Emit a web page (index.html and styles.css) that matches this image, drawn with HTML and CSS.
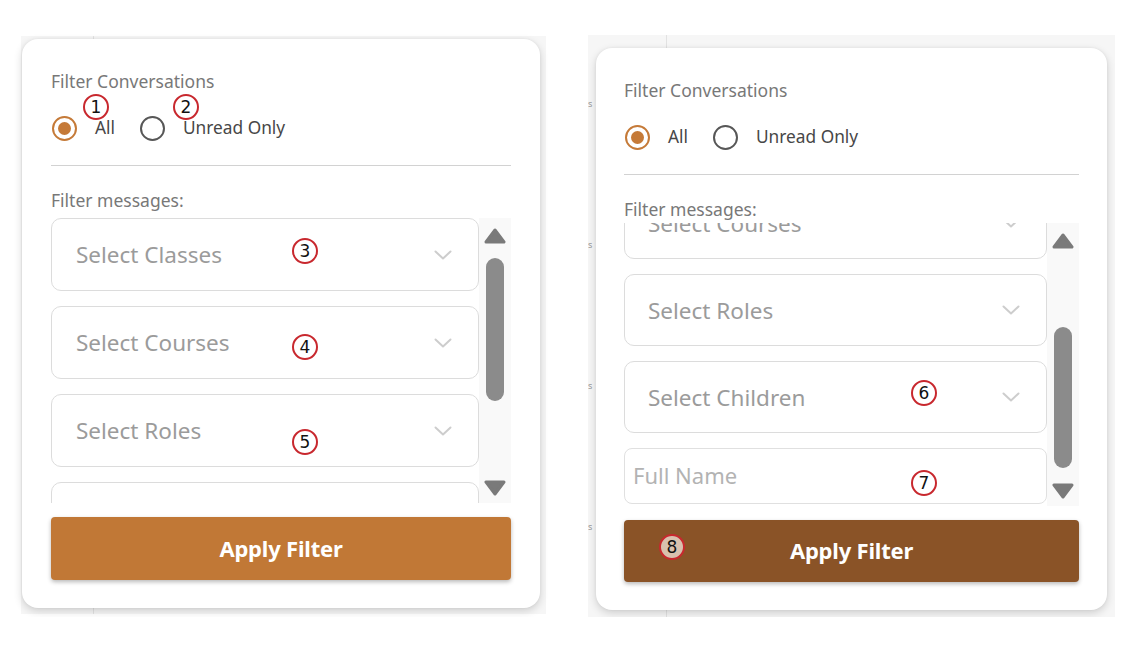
FILE: index.html
```html
<!DOCTYPE html>
<html lang="en">
<head>
<meta charset="utf-8">
<title>Filter Conversations</title>
<link rel="stylesheet" href="styles.css">
</head>
<body>
<div class="page">
  <section class="shot shot--left">
    <div class="card">
      <div class="label">Filter Conversations</div>
      <div class="radios">
        <div class="radio radio--on"><span class="ring"></span><span class="radio-text">All</span></div>
        <div class="radio"><span class="ring"></span><span class="radio-text">Unread Only</span></div>
      </div>
      <div class="divider"></div>
      <div class="label label--msg">Filter messages:</div>
      <div class="msg-area">
        <div class="msg-viewport">
          <div class="msg-list">
            <div class="select"><span>Select Classes</span><svg class="chev" viewBox="0 0 18 10" width="18" height="10"><path d="M1.5 1.5 L9 8.5 L16.5 1.5"/></svg></div>
            <div class="select"><span>Select Courses</span><svg class="chev" viewBox="0 0 18 10" width="18" height="10"><path d="M1.5 1.5 L9 8.5 L16.5 1.5"/></svg></div>
            <div class="select"><span>Select Roles</span><svg class="chev" viewBox="0 0 18 10" width="18" height="10"><path d="M1.5 1.5 L9 8.5 L16.5 1.5"/></svg></div>
            <div class="select"><span>Select Children</span><svg class="chev" viewBox="0 0 18 10" width="18" height="10"><path d="M1.5 1.5 L9 8.5 L16.5 1.5"/></svg></div>
            <div class="input">Full Name</div>
          </div>
        </div>
        <div class="scrollbar">
          <svg class="arrow" viewBox="0 0 22 16" width="22" height="16"><path d="M11 2 L20 14 L2 14 Z"/></svg>
          <div class="track"><div class="thumb" style="margin-top:14px;height:143px"></div></div>
          <svg class="arrow" viewBox="0 0 22 16" width="22" height="16"><path d="M2 2 L20 2 L11 14 Z"/></svg>
        </div>
      </div>
      <button class="apply">Apply Filter</button>
    </div>
    <span class="badge b1">1</span>
    <span class="badge b2">2</span>
    <span class="badge b3">3</span>
    <span class="badge b4">4</span>
    <span class="badge b5">5</span>
  </section>

  <section class="shot shot--right">
    <div class="strip"><span>s</span><span>s</span><span>s</span><span>s</span></div>
    <div class="card card--scrolled">
      <div class="label">Filter Conversations</div>
      <div class="radios">
        <div class="radio radio--on"><span class="ring"></span><span class="radio-text">All</span></div>
        <div class="radio"><span class="ring"></span><span class="radio-text">Unread Only</span></div>
      </div>
      <div class="divider"></div>
      <div class="label label--msg">Filter messages:</div>
      <div class="msg-area">
        <div class="msg-viewport">
          <div class="msg-list" style="margin-top:-123px">
            <div class="select"><span>Select Classes</span><svg class="chev" viewBox="0 0 18 10" width="18" height="10"><path d="M1.5 1.5 L9 8.5 L16.5 1.5"/></svg></div>
            <div class="select"><span>Select Courses</span><svg class="chev" viewBox="0 0 18 10" width="18" height="10"><path d="M1.5 1.5 L9 8.5 L16.5 1.5"/></svg></div>
            <div class="select"><span>Select Roles</span><svg class="chev" viewBox="0 0 18 10" width="18" height="10"><path d="M1.5 1.5 L9 8.5 L16.5 1.5"/></svg></div>
            <div class="select"><span>Select Children</span><svg class="chev" viewBox="0 0 18 10" width="18" height="10"><path d="M1.5 1.5 L9 8.5 L16.5 1.5"/></svg></div>
            <div class="input">Full Name</div>
          </div>
        </div>
        <div class="scrollbar">
          <svg class="arrow" viewBox="0 0 22 16" width="22" height="16"><path d="M11 2 L20 14 L2 14 Z"/></svg>
          <div class="track"><div class="thumb" style="margin-top:78px;height:141px"></div></div>
          <svg class="arrow" viewBox="0 0 22 16" width="22" height="16"><path d="M2 2 L20 2 L11 14 Z"/></svg>
        </div>
      </div>
      <button class="apply apply--pressed">Apply Filter</button>
    </div>
    <span class="badge b6">6</span>
    <span class="badge b7">7</span>
    <span class="badge b8 badge--filled">8</span>
  </section>
</div>
</body>
</html>
```

FILE: styles.css
```css
* { box-sizing: border-box; }

html, body {
  margin: 0;
  padding: 0;
  background: #ffffff;
}

body {
  font-family: "Noto Sans", "Open Sans", sans-serif;
}

.page {
  display: flex;
  align-items: flex-start;
  gap: 42px;
  padding: 35px 0 0 21px;
}

.shot {
  position: relative;
  background-color: #f6f6f6;
}

.shot--left {
  width: 525px;
  height: 578px;
  margin-top: 1px;
  padding: 3px 0 0 1px;
  background-image: linear-gradient(#e2e2e2, #e2e2e2);
  background-size: 1px 100%;
  background-position: 72px 0;
  background-repeat: no-repeat;
}

.shot--right {
  width: 527px;
  height: 582px;
  display: flex;
  align-items: flex-start;
  background-image: linear-gradient(#e2e2e2, #e2e2e2);
  background-size: 1px 100%;
  background-position: 78px 0;
  background-repeat: no-repeat;
}

.strip {
  width: 8px;
  flex: none;
  display: flex;
  flex-direction: column;
  padding-top: 62px;
  gap: 128px;
  font-size: 9px;
  line-height: 13px;
  color: #9a9a9a;
  overflow: hidden;
}

.card {
  width: 518px;
  background: #ffffff;
  border-radius: 16px;
  box-shadow: 0 3px 9px rgba(0, 0, 0, 0.16), 0 0 3px rgba(0, 0, 0, 0.06);
  padding: 32px 29px 28px 29px;
  display: flex;
  flex-direction: column;
}

.card--scrolled {
  width: 511px;
  margin-top: 13px;
  padding: 32px 28px 28px 28px;
}

.label {
  font-size: 17.5px;
  line-height: 20px;
  color: #787878;
}

.radios {
  display: flex;
  align-items: center;
  height: 26px;
  margin-top: 24px;
  padding-left: 1px;
}

.radio {
  display: flex;
  align-items: center;
  gap: 18px;
  margin-right: 25px;
}

.ring {
  width: 25px;
  height: 25px;
  border-radius: 50%;
  border: 2.5px solid #575757;
  display: flex;
  align-items: center;
  justify-content: center;
}

.radio--on .ring {
  border-color: #c57a38;
}

.radio--on .ring::after {
  content: "";
  width: 13px;
  height: 13px;
  border-radius: 50%;
  background: #c57a38;
}

.radio-text {
  font-size: 17.3px;
  line-height: 22px;
  color: #474747;
}

.divider {
  height: 1px;
  background: #d2d2d2;
  margin-top: 24px;
}

.label--msg {
  margin-top: 24px;
}

.msg-area {
  display: flex;
  margin-top: 8px;
  height: 285px;
}

.card--scrolled .msg-area {
  margin-top: 4px;
  height: 283px;
}

.msg-viewport {
  flex: 1;
  overflow: hidden;
}

.msg-list {
  display: flex;
  flex-direction: column;
  gap: 15px;
}

.select {
  flex: none;
  height: 73px;
  border: 1px solid #dcdcdc;
  border-radius: 10px;
  padding: 0 26px 0 24px;
  display: flex;
  align-items: center;
  justify-content: space-between;
  font-size: 22.5px;
  color: #9b9b9b;
}

.card--scrolled .select {
  height: 72px;
  padding-left: 23px;
}

.chev {
  fill: none;
  stroke: #cdcdcd;
  stroke-width: 2;
  stroke-linecap: round;
  stroke-linejoin: round;
}

.input {
  flex: none;
  height: 56px;
  border: 1px solid #e0e0e0;
  border-radius: 8px;
  padding: 0 0 3px 8px;
  display: flex;
  align-items: center;
  font-size: 22px;
  color: #b3b3b3;
}

.scrollbar {
  width: 32px;
  flex: none;
  background: #f9f9f9;
  display: flex;
  flex-direction: column;
  align-items: center;
  padding: 10px 0 7px 0;
}

.arrow {
  flex: none;
  fill: #7a7a7a;
  stroke: #7a7a7a;
  stroke-width: 3;
  stroke-linejoin: round;
}

.track {
  flex: 1;
  width: 18px;
}

.thumb {
  width: 18px;
  border-radius: 9px;
  background: #8b8b8b;
}

.apply {
  margin-top: 14px;
  height: 63px;
  border: none;
  border-radius: 4px;
  background: #c17836;
  color: #ffffff;
  font-family: "Noto Sans", "Open Sans", sans-serif;
  font-weight: 700;
  font-size: 22px;
  letter-spacing: -0.2px;
  box-shadow: 0 2px 4px rgba(0, 0, 0, 0.28);
  padding: 0 0 2px 0;
}

.apply--pressed {
  height: 62px;
  background: #8a5327;
}

.badge {
  position: absolute;
  width: 26px;
  height: 26px;
  border-radius: 50%;
  border: 2px solid #c8282e;
  background: #ffffff;
  color: #111111;
  font-family: "DejaVu Sans", sans-serif;
  font-size: 17px;
  line-height: 22px;
  text-align: center;
}

.badge--filled {
  background: #d8c1ae;
}

.b1 { left: 62px; top: 58px; }
.b2 { left: 152px; top: 58px; }
.b3 { left: 271px; top: 202px; }
.b4 { left: 271px; top: 298px; }
.b5 { left: 271px; top: 393px; }
.b6 { left: 323px; top: 345px; }
.b7 { left: 323px; top: 435px; }
.b8 { left: 71px; top: 499px; }
```
